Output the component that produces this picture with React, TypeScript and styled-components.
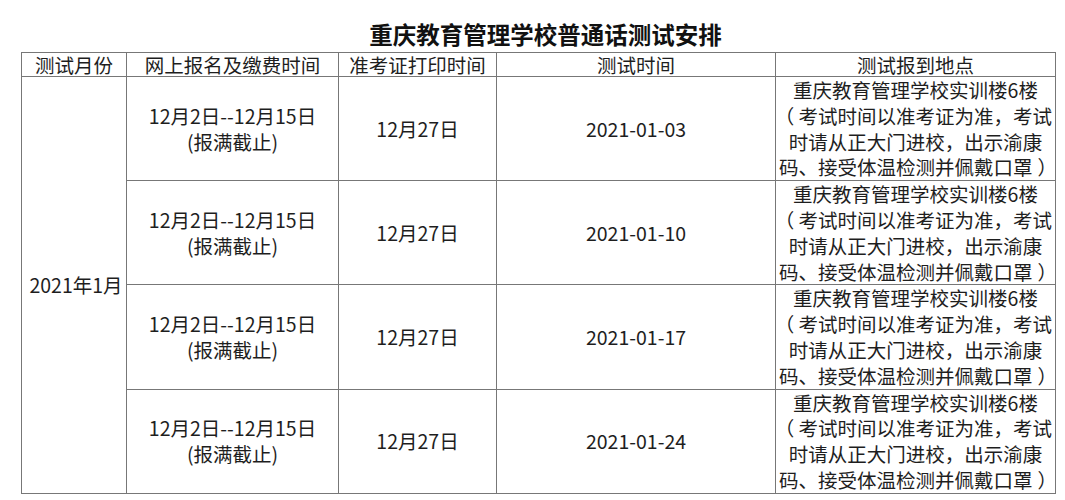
import styled, { createGlobalStyle } from "styled-components";

const GlobalStyle = createGlobalStyle`
  body {
    margin: 0;
    background: #ffffff;
    font-family: "Noto Sans CJK SC", "Noto Sans", sans-serif;
    color: #1e1e1e;
  }
`;

const columns = [105, 212, 158, 279, 280];

const headers = [
  "测试月份",
  "网上报名及缴费时间",
  "准考证打印时间",
  "测试时间",
  "测试报到地点",
];

const dates = ["2021-01-03", "2021-01-10", "2021-01-17", "2021-01-24"];

const placeLines = [
  "重庆教育管理学校实训楼6楼",
  "（考试时间以准考证为准，考试",
  "时请从正大门进校，出示渝康",
  "码、接受体温检测并佩戴口罩）",
];

// full-width brackets keep their whole em box, like the original document
const renderLine = (line: string) =>
  line.split(/([（）])/).map((part, i) =>
    part === "（" || part === "）" ? (
      <Bracket key={i} $open={part === "（"}>
        {part}
      </Bracket>
    ) : (
      part
    )
  );

const App = () => {
  return (
    <>
      <GlobalStyle />
      <PageStyled>
        <TitleStyled>重庆教育管理学校普通话测试安排</TitleStyled>
        <TableStyled>
          <colgroup>
            {columns.map((w, i) => (
              <col key={i} style={{ width: w }} />
            ))}
          </colgroup>
          <thead>
            <tr>
              {headers.map((h) => (
                <HeadCell key={h}>{h}</HeadCell>
              ))}
            </tr>
          </thead>
          <tbody>
            {dates.map((d, i) => (
              <tr key={d}>
                {i === 0 && <MonthCell rowSpan={4}>2021年1月</MonthCell>}
                <BodyCell>
                  12月2日--12月15日
                  <br />
                  (报满截止)
                </BodyCell>
                <BodyCell>12月27日</BodyCell>
                <BodyCell>{d}</BodyCell>
                <PlaceCell>
                  {placeLines.map((line, j) => (
                    <div key={j}>{renderLine(line)}</div>
                  ))}
                </PlaceCell>
              </tr>
            ))}
          </tbody>
        </TableStyled>
      </PageStyled>
    </>
  );
};

const PageStyled = styled.div`
  padding: 18px 0 0 21px;
  width: 1035px;
`;

const TitleStyled = styled.div`
  font-size: 23.5px;
  font-weight: 700;
  line-height: 32px;
  text-align: center;
  padding-left: 14px;
  margin-bottom: 2px;
  color: #111111;
`;

const TableStyled = styled.table`
  width: 1035px;
  table-layout: fixed;
  border-collapse: collapse;
  font-size: 19.5px;
`;

const HeadCell = styled.th`
  font-weight: 400;
  height: 23px;
  line-height: 23px;
  padding: 0;
  text-align: center;
  border: 1px solid #777777;
  white-space: nowrap;
`;

const BodyCell = styled.td`
  height: 103px;
  line-height: 26px;
  padding: 0;
  text-align: center;
  vertical-align: middle;
  border: 1px solid #777777;
  border-top-width: 1.5px;
  white-space: nowrap;
`;

const MonthCell = styled(BodyCell)`
  padding-left: 4px;
`;

const PlaceCell = styled(BodyCell)`
  line-height: 25.8px;
  overflow: hidden;
`;

const Bracket = styled.span<{ $open: boolean }>`
  display: inline-block;
  width: 1em;
  text-align: left;
  text-indent: ${(p) => (p.$open ? "-0.22em" : "0.25em")};
`;

export default App;
